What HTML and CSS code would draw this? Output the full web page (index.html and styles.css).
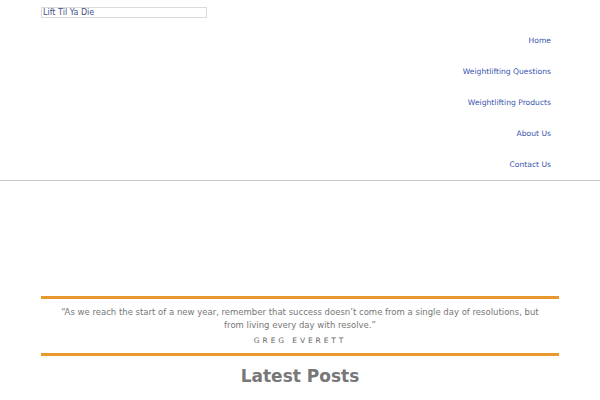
FILE: index.html
```html
<!DOCTYPE html>
<html lang="en">
<head>
	<meta charset="UTF-8">
	<title>Lift Til Ya Die</title>
	<link rel="stylesheet" href="styles.css">
</head>
<body>

	<header>
		<div class="logo"><a href="#">Lift Til Ya Die</a></div>
		<nav>
			<a href="#">Home</a>
			<a href="#">Weightlifting Questions</a>
			<a href="#">Weightlifting Products</a>
			<a href="#">About Us</a>
			<a href="#">Contact Us</a>
		</nav>
	</header>

	<div class="container">
		<!-- Цитата -->
		<div class="quote">
			<p>“As we reach the start of a new year, remember that success doesn’t come from a single day of resolutions, but from living every day with resolve.”</p>
			<div class="author">Greg Everett</div>
		</div>

		<h2>Latest Posts</h2>
	</div>

</body>
</html>
```

FILE: styles.css
```css
body {
    font-family: "DejaVu Sans", Verdana, sans-serif;
    margin: 0;
    padding: 0;
    background-color: #fff;
    color: #777;
}
header {
    border-bottom: 1px solid #c8c8c8;
    padding: 7px 49px 0 41px;
}
.logo {
    width: 163px;
    height: 9px;
    border: 1px solid #dcdcdc;
    font-size: 8px;
    line-height: 9px;
    padding-left: 1px;
}
.logo a {
    color: #44528a;
    text-decoration: none;
}
nav {
    display: flex;
    flex-direction: column;
    align-items: flex-end;
    margin-top: 7px;
}
nav a {
    color: #3a55b0;
    text-decoration: none;
    font-size: 7.6px;
    line-height: 31px;
}
.container {
    margin: 115px 41px 0;
}
.quote {
    border-top: 3px solid #e8982f;
    border-bottom: 3px solid #e8982f;
    text-align: center;
    padding: 7px 15px 8px;
}
.quote p {
    margin: 0;
    font-size: 8.5px;
    line-height: 13px;
    color: #777;
}
.author {
    font-size: 7.5px;
    letter-spacing: 2.9px;
    text-transform: uppercase;
    color: #666;
    margin-top: 4px;
}
h2 {
    margin: 10px 0 0;
    text-align: center;
    font-size: 17px;
    line-height: 20px;
    color: #777;
}
```
